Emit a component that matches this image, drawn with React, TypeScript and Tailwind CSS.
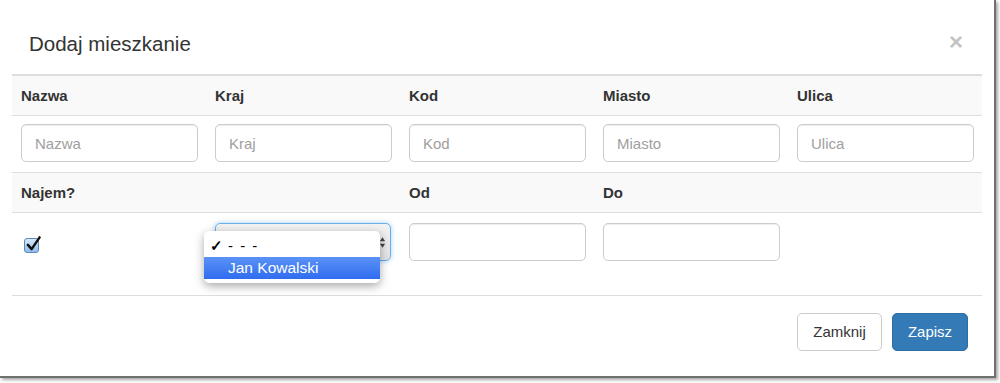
import { ReactNode } from 'react';

const font = { fontFamily: '"Liberation Sans", Arial, sans-serif' };

function Cell({ children, className = '' }: { children?: ReactNode; className?: string }) {
  return <div className={`px-[9px] ${className}`}>{children}</div>;
}

function TextInput({ placeholder }: { placeholder?: string }) {
  return (
    <input
      placeholder={placeholder}
      className="h-[38px] w-[177px] rounded-[5px] border border-[#cccccc] bg-white px-[13px] text-[15px] text-[#555] placeholder:text-[#a0a0a0] shadow-[inset_0_1px_1px_rgba(0,0,0,0.075)] outline-none"
      style={font}
    />
  );
}

function MacCheckbox() {
  return (
    <div className="relative mt-[15px] ml-[3px] h-[15px] w-[15px] rounded-[3px] border border-[#5f87b5] bg-gradient-to-b from-[#d8e9fb] to-[#8fbdef]">
      <svg viewBox="0 0 16 16" className="absolute -top-[4px] left-[1px] h-[17px] w-[15px]">
        <path d="M2 9.5 L6 14 L14.5 1.5" fill="none" stroke="#111" strokeWidth="2.6" strokeLinecap="round" strokeLinejoin="round" />
      </svg>
    </div>
  );
}

function SelectWithPopup() {
  return (
    <div className="relative h-[38px] w-[176px]">
      <div className="flex h-full w-full items-center justify-end rounded-[5px] border border-[#66afe9] bg-gradient-to-b from-[#f3f3f3] to-[#e2e2e2] pr-[4px] shadow-[0_0_5px_rgba(102,175,233,0.6)]">
        <svg viewBox="0 0 8 14" className="h-[13px] w-[7px]">
          <path d="M4 1 L7 5.5 H1 Z M4 13 L7 8.5 H1 Z" fill="#444" />
        </svg>
      </div>
      <div
        className="absolute left-[-11px] top-[8px] w-[176px] rounded-[5px] bg-white py-[4px] shadow-[0_3px_10px_rgba(0,0,0,0.35)]"
        style={font}
      >
        <div className="flex h-[22px] items-center text-[15px] text-black">
          <span className="w-[24px] pl-[6px] text-[15px] font-bold">✓</span>
          <span className="tracking-[1.5px]">- - -</span>
        </div>
        <div className="flex h-[22px] items-center bg-gradient-to-b from-[#5b92f6] to-[#2f6cf0] pl-[24px] text-[15.5px] text-white">
          Jan Kowalski
        </div>
      </div>
    </div>
  );
}

export default function App() {
  const cols = ['Nazwa', 'Kraj', 'Kod', 'Miasto', 'Ulica'];
  return (
    <div className="h-[383px] w-[1000px] overflow-hidden bg-white" style={font}>
      <div className="flex h-[378px] w-[996px] flex-col border-r-2 border-b-2 border-[#707070] bg-white shadow-[2px_2px_3px_rgba(0,0,0,0.35)]">
        <div className="flex h-[74px] items-start justify-between pl-[29px] pr-[31px]">
          <h4 className="mt-[31px] text-[20.5px] leading-[26px] text-[#333]">Dodaj mieszkanie</h4>
          <span className="mt-[31px] text-[24px] font-bold leading-[22px] text-[#c4c4c4]">×</span>
        </div>

        <div className="mx-[12px] text-[15px] text-[#333]">
          <div className="grid h-[42px] grid-cols-5 items-center border-t-2 border-b border-[#dddddd] bg-[#f9f9f9] pt-[2px] font-bold">
            {cols.map((c) => (
              <Cell key={c}>{c}</Cell>
            ))}
          </div>
          <div className="grid h-[57px] grid-cols-5 border-b border-[#dddddd] pt-[8px]">
            {cols.map((c) => (
              <Cell key={c}>
                <TextInput placeholder={c} />
              </Cell>
            ))}
          </div>
          <div className="grid h-[40px] grid-cols-5 items-center border-b border-[#dddddd] bg-[#f9f9f9] pt-[2px] font-bold">
            <Cell>Najem?</Cell>
            <Cell />
            <Cell>Od</Cell>
            <Cell>Do</Cell>
            <Cell />
          </div>
          <div className="grid h-[83px] grid-cols-5 border-b border-[#dddddd] pt-[10px]">
            <Cell>
              <MacCheckbox />
            </Cell>
            <Cell>
              <SelectWithPopup />
            </Cell>
            <Cell>
              <TextInput />
            </Cell>
            <Cell>
              <TextInput />
            </Cell>
            <Cell />
          </div>
        </div>

        <div className="flex justify-end gap-[10px] pr-[26px] pt-[17px]">
          <button className="h-[38px] w-[85px] rounded-[5px] border border-[#cccccc] bg-white text-[15px] text-[#333]">
            Zamknij
          </button>
          <button className="h-[38px] w-[76px] rounded-[5px] border border-[#2e6da4] bg-[#337ab7] text-[15px] text-white">
            Zapisz
          </button>
        </div>
      </div>
    </div>
  );
}
